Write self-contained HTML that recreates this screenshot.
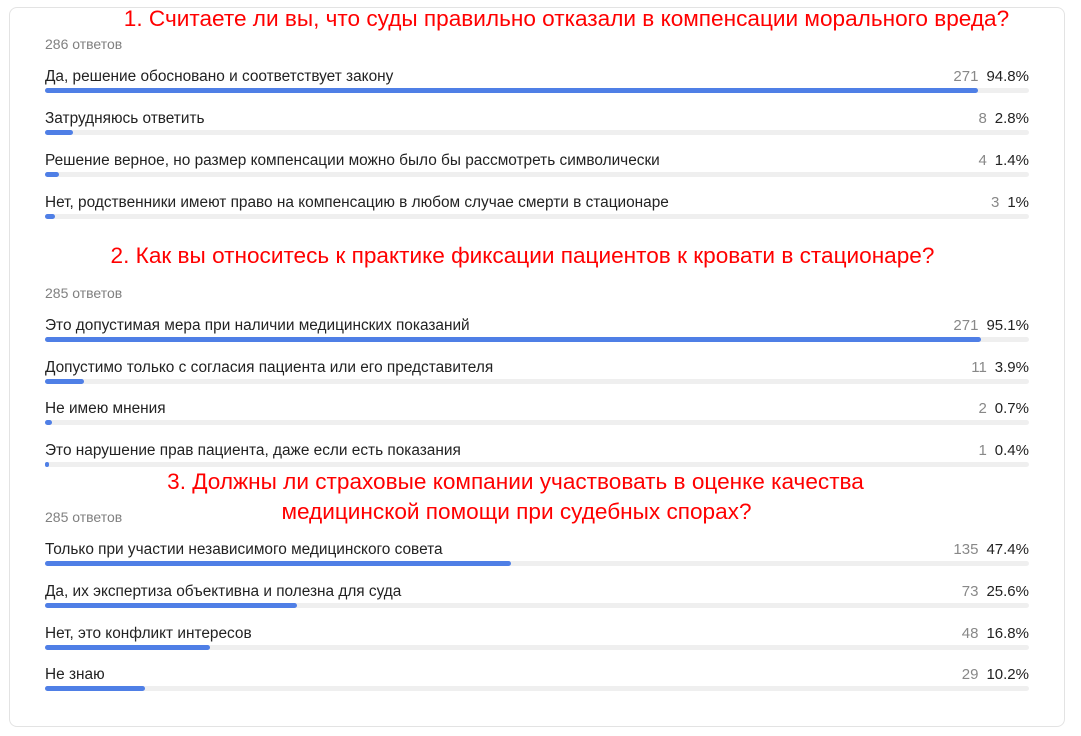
<!DOCTYPE html>
<html><head><meta charset="utf-8"><style>
body{margin:0;width:1081px;height:736px;background:#fff;font-family:"Liberation Sans",sans-serif;position:relative;overflow:hidden}
.card{position:absolute;left:9px;top:7px;width:1054px;height:718px;border:1px solid #e3e3e3;border-radius:8px}
.h{position:absolute;left:0;width:1081px;text-align:center;color:#f00;font-size:22.6px;line-height:26px;white-space:nowrap}
.c{position:absolute;left:45px;color:#808080;font-size:14px;line-height:16px}
.l{position:absolute;left:45px;color:#222;font-size:15.4px;line-height:18px;white-space:nowrap}
.v{position:absolute;right:52px;font-size:15px;line-height:18px;color:#222;white-space:nowrap}
.v span{color:#888;margin-right:8px}
.t{position:absolute;left:45px;width:984px;height:5px;background:#efefef;border-radius:3px}
.f{height:5px;background:#4f7fe6;border-radius:3px}
</style></head><body>
<div class="card"></div>
<div class="h" style="top:6px;left:26px">1. Считаете ли вы, что суды правильно отказали в компенсации морального вреда?</div>
<div class="c" style="top:36px">286 ответов</div>
<div class="l" style="top:68px">Да, решение обосновано и соответствует закону</div><div class="v" style="top:68px"><span>271</span>94.8%</div><div class="t" style="top:88px"><div class="f" style="width:933px"></div></div>
<div class="l" style="top:110px">Затрудняюсь ответить</div><div class="v" style="top:110px"><span>8</span>2.8%</div><div class="t" style="top:130px"><div class="f" style="width:28px"></div></div>
<div class="l" style="top:152px">Решение верное, но размер компенсации можно было бы рассмотреть символически</div><div class="v" style="top:152px"><span>4</span>1.4%</div><div class="t" style="top:172px"><div class="f" style="width:14px"></div></div>
<div class="l" style="top:194px">Нет, родственники имеют право на компенсацию в любом случае смерти в стационаре</div><div class="v" style="top:194px"><span>3</span>1%</div><div class="t" style="top:214px"><div class="f" style="width:10px"></div></div>

<div class="h" style="top:243px;left:-18px">2. Как вы относитесь к практике фиксации пациентов к кровати в стационаре?</div>
<div class="c" style="top:285px">285 ответов</div>
<div class="l" style="top:317px">Это допустимая мера при наличии медицинских показаний</div><div class="v" style="top:317px"><span>271</span>95.1%</div><div class="t" style="top:337px"><div class="f" style="width:936px"></div></div>
<div class="l" style="top:359px">Допустимо только с согласия пациента или его представителя</div><div class="v" style="top:359px"><span>11</span>3.9%</div><div class="t" style="top:379px"><div class="f" style="width:39px"></div></div>
<div class="l" style="top:400px">Не имею мнения</div><div class="v" style="top:400px"><span>2</span>0.7%</div><div class="t" style="top:420px"><div class="f" style="width:7px"></div></div>
<div class="l" style="top:442px">Это нарушение прав пациента, даже если есть показания</div><div class="v" style="top:442px"><span>1</span>0.4%</div><div class="t" style="top:462px"><div class="f" style="width:4px"></div></div>

<div class="h" style="top:469px;left:-25px">3. Должны ли страховые компании участвовать в оценке качества</div>
<div class="h" style="top:499px;left:-24px">медицинской помощи при судебных спорах?</div>
<div class="c" style="top:509px">285 ответов</div>
<div class="l" style="top:541px">Только при участии независимого медицинского совета</div><div class="v" style="top:541px"><span>135</span>47.4%</div><div class="t" style="top:561px"><div class="f" style="width:466px"></div></div>
<div class="l" style="top:583px">Да, их экспертиза объективна и полезна для суда</div><div class="v" style="top:583px"><span>73</span>25.6%</div><div class="t" style="top:603px"><div class="f" style="width:252px"></div></div>
<div class="l" style="top:625px">Нет, это конфликт интересов</div><div class="v" style="top:625px"><span>48</span>16.8%</div><div class="t" style="top:645px"><div class="f" style="width:165px"></div></div>
<div class="l" style="top:666px">Не знаю</div><div class="v" style="top:666px"><span>29</span>10.2%</div><div class="t" style="top:686px"><div class="f" style="width:100px"></div></div>
</body></html>
